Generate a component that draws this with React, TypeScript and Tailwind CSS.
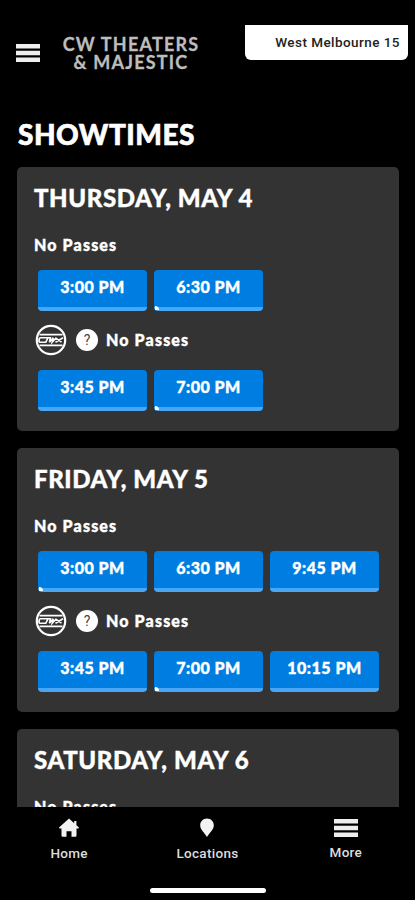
type Showtime = { time: string; glint?: boolean }

type Day = { title: string; standard: Showtime[]; large: Showtime[] }

const days: Day[] = [
  {
    title: 'THURSDAY, MAY 4',
    standard: [{ time: '3:00 PM' }, { time: '6:30 PM', glint: true }],
    large: [{ time: '3:45 PM' }, { time: '7:00 PM', glint: true }],
  },
  {
    title: 'FRIDAY, MAY 5',
    standard: [{ time: '3:00 PM', glint: true }, { time: '6:30 PM' }, { time: '9:45 PM' }],
    large: [{ time: '3:45 PM' }, { time: '7:00 PM', glint: true }, { time: '10:15 PM' }],
  },
  {
    title: 'SATURDAY, MAY 6',
    standard: [],
    large: [],
  },
]

function Bars() {
  return (
    <svg width="24" height="18" viewBox="0 0 24 18" fill="currentColor">
      <path d="M0 0h24v4.4H0zM0 6.8h24v4.4H0zM0 13.6h24V18H0z" />
    </svg>
  )
}

function LargeFormatBadge() {
  return (
    <svg width="32" height="32" viewBox="0 0 32 32" fill="none" stroke="#fff">
      <circle cx="16" cy="16" r="14.2" strokeWidth="2.2" />
      <path d="M4.5 10.7h23M4.5 21.3h23" strokeWidth="1.8" />
      <path
        d="M11 13.8H5.2c-1.4 0-1.8 4.4-.4 4.4h6l2.2-4.4M10.8 13.8h4.6l-1 4.4 3.8-4.4-1 4.4 4-4.4M20.5 13.8l6 4.4M28 13.8l-7.5 4.4"
        strokeWidth="1.6"
      />
    </svg>
  )
}

function TimeRow({ times }: { times: Showtime[] }) {
  return (
    <div className="flex gap-[7px] pl-[3px]">
      {times.map(({ time, glint }) => (
        <button
          key={time}
          className="relative h-[41px] w-[109px] shrink-0 rounded-[4px] border-b-4 border-[#47a6f5] bg-[#007de0] pb-1 text-[16px] leading-[33px] font-black tracking-[0.5px] text-white [-webkit-text-stroke:0.4px]"
        >
          {time}
          {glint && <span className="absolute -bottom-[3px] left-px size-1 rounded-tr-full bg-white" />}
        </button>
      ))}
    </div>
  )
}

function DayCard({ day }: { day: Day }) {
  return (
    <section className="h-[264px] shrink-0 rounded-[5px] bg-[#333] pt-[15px] pr-[18px] pl-[17px] [-webkit-text-stroke:0.4px]">
      <h2 className="h-8 text-[24px] leading-8 font-black tracking-[0.6px] whitespace-nowrap">{day.title}</h2>
      <p className="mt-[21px] mb-[15px] h-5 text-[16px] leading-5 font-black tracking-[1.15px]">No Passes</p>
      {day.standard.length > 0 && (
        <div className="pl-px">
          <TimeRow times={day.standard} />
          <div className="mt-[13px] mb-[14px] flex h-8 items-center">
            <LargeFormatBadge />
            <span className="ml-[9px] flex size-[22px] items-center justify-center rounded-full bg-white font-[Roboto] text-[14px] text-[#444] [-webkit-text-stroke:0]">
              ?
            </span>
            <span className="ml-2 text-[16px] leading-5 font-black tracking-[1.15px]">No Passes</span>
          </div>
          <TimeRow times={day.large} />
        </div>
      )}
    </section>
  )
}

export default function App() {
  return (
    <div className="flex h-[900px] w-[415px] flex-col overflow-hidden bg-black font-[Lato,sans-serif] text-white">
      <header className="flex h-[105px] shrink-0 items-start pt-[25px]">
        <button className="mt-[19px] ml-4 text-[#eee]">
          <Bars />
        </button>
        <div className="mt-[10px] ml-[22px] w-[138px] text-center text-[18px] leading-[18px] font-bold tracking-[1.2px] whitespace-nowrap text-[#bdbdbd] [-webkit-text-stroke:0.3px]">
          CW THEATERS
          <br />
          &amp; MAJESTIC
        </div>
        <div className="ml-[45px] h-[35px] w-[163px] rounded-b-[6px] bg-white pr-[8px] text-right font-[Roboto,sans-serif] text-[13.5px] leading-[35px] font-medium tracking-[0.45px] whitespace-nowrap text-[#222]">
          West Melbourne 15
        </div>
      </header>

      <main className="flex min-h-0 flex-1 flex-col gap-[17px] overflow-hidden pr-4 pl-[17px]">
        <h1 className="-mb-[17px] h-[62px] shrink-0 pt-[11px] pl-px text-[28px] leading-9 font-black tracking-[0.5px] [-webkit-text-stroke:0.6px]">
          SHOWTIMES
        </h1>
        {days.map((day) => (
          <DayCard key={day.title} day={day} />
        ))}
      </main>

      <nav className="flex h-[93px] shrink-0 flex-col items-center bg-black font-[Roboto,sans-serif] text-[13.5px] font-medium tracking-[0.3px] text-[#ddd]">
        <div className="grid h-[81px] w-full grid-cols-3 justify-items-center">
          <a className="flex flex-col items-center">
            <svg className="mt-[11px] text-[#f3f3f3]" width="20" height="20" viewBox="0 0 20 20" fill="currentColor">
              <path d="M10 .5 0 9.6q0 .9 1 .9h1.5v7q0 1.2 1.2 1.2h3.8v-5.5h5v5.5h3.8q1.2 0 1.2-1.2v-7H19q1 0 1-.9l-2.6-2.4V3h-2.2v2.2z" />
            </svg>
            <span className="mt-[5px] leading-5">Home</span>
          </a>
          <a className="flex flex-col items-center">
            <svg className="mt-[11px] text-[#f3f3f3]" width="14" height="20" viewBox="0 0 14 20" fill="currentColor">
              <path d="M7 .5C3.2.5.2 3.4.2 7.2.2 11.8 4.6 14.6 7 19c2.4-4.4 6.8-7.2 6.8-11.8C13.8 3.4 10.8.5 7 .5Z" />
            </svg>
            <span className="mt-[5px] leading-5">Locations</span>
          </a>
          <a className="flex flex-col items-center">
            <span className="mt-3 h-[18px] text-[#eee]">
              <Bars />
            </span>
            <span className="mt-[5px] leading-5">More</span>
          </a>
        </div>
        <div className="h-[5px] w-[116px] rounded-full bg-white" />
      </nav>
    </div>
  )
}
